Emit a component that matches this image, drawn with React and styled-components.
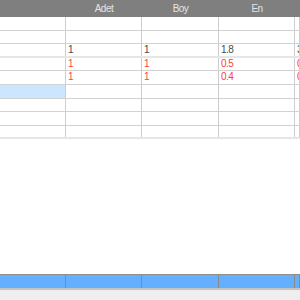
import React from "react";
import styled, { createGlobalStyle } from "styled-components";

const GlobalStyle = createGlobalStyle`
  html, body {
    margin: 0;
    padding: 0;
    background: #ffffff;
  }
  #root {
    width: 300px;
    height: 300px;
    overflow: hidden;
  }
`;

const columns = "66px 76px 77px 76px 1fr";

const rows = [
  { cells: ["", "", "", "", ""] },
  { cells: ["", "", "", "", ""] },
  { cells: ["", "1", "1", "1.8", "3"], band: true },
  { cells: ["", "1", "1", "0.5", "0"], warn: true },
  { cells: ["", "1", "1", "0.4", "0"], warn: true },
  { cells: ["", "", "", "", ""], selected: 0 },
  { cells: ["", "", "", "", ""] },
  { cells: ["", "", "", "", ""] },
  { cells: ["", "", "", "", ""], band: true },
];

export default function App() {
  return (
    <>
      <GlobalStyle />
      <Grid>
        <HeaderRow>
          <HeadCell />
          <HeadCell>Adet</HeadCell>
          <HeadCell>Boy</HeadCell>
          <HeadCell>En</HeadCell>
          <HeadCell />
        </HeaderRow>

        {rows.map((row, i) => (
          <Row key={i} $band={row.band}>
            {row.cells.map((c, j) => (
              <Cell key={j} $warn={row.warn} $selected={row.selected === j}>
                {c}
              </Cell>
            ))}
          </Row>
        ))}

        <Spacer />

        <FooterRow>
          <FootCell />
          <FootCell />
          <FootCell />
          <FootCell />
          <FootCell />
        </FooterRow>
        <ScrollStrip />
      </Grid>
    </>
  );
}

const Grid = styled.div`
  display: flex;
  flex-direction: column;
  height: 300px;
  font-family: "Liberation Sans", Arial, sans-serif;
  font-size: 10px;
  letter-spacing: -0.5px;
`;

const HeaderRow = styled.div`
  display: grid;
  grid-template-columns: ${columns};
  height: 17px;
  background: #7f7f7f;
`;

const HeadCell = styled.div`
  color: #e4e4e4;
  text-align: center;
  line-height: 17px;
  white-space: nowrap;
  overflow: hidden;
`;

const Row = styled.div`
  display: grid;
  grid-template-columns: ${columns};
  height: 13.6px;
  box-sizing: border-box;
  border-bottom: ${(p) => (p.$band ? "2px solid #e6e6e6" : "1px solid #d2d2d2")};
`;

const Cell = styled.div`
  box-sizing: border-box;
  border-right: 1px solid #cdcdcd;
  padding-left: 2px;
  line-height: 12.6px;
  white-space: nowrap;
  overflow: hidden;
  color: ${(p) => (p.$warn ? "#ff3b3b" : "#4a4a4a")};
  background: ${(p) => (p.$selected ? "#cce6ff" : "transparent")};
`;

const Spacer = styled.div`
  flex: 1;
`;

const FooterRow = styled.div`
  display: grid;
  grid-template-columns: ${columns};
  height: 14px;
  box-sizing: border-box;
  border-top: 1px solid #8e8e8e;
  background: #64b0ff;
`;

const FootCell = styled.div`
  box-sizing: border-box;
  border-right: 1px solid #8a8a8a;
`;

const ScrollStrip = styled.div`
  height: 12px;
  box-sizing: border-box;
  border-top: 2px solid #c4c4c4;
  background: #eeeeee;
`;
